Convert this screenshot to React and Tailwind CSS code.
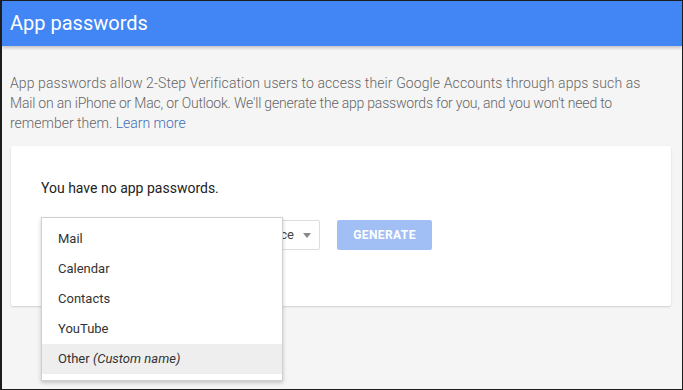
import React from "react";

const options = ["Mail", "Calendar", "Contacts", "YouTube"];

const App = () => {
  return (
    <div
      className="w-[683px] h-[390px] overflow-hidden border border-l-2 border-[#1c1c1c] bg-[#f5f5f5] flex flex-col"
      style={{ fontFamily: "Roboto, 'Liberation Sans', sans-serif" }}
    >
      {/* HEADER */}
      <div className="h-[45px] shrink-0 bg-[#4285f4] px-[8px] flex items-center shadow-[0_2px_3px_rgba(0,0,0,0.2)] relative z-10">
        <h1 className="text-[20px] text-white leading-none pb-[2px]">App passwords</h1>
      </div>

      {/* BODY */}
      <div className="px-[8px] pt-[27px]">
        <p className="text-[14px] leading-[20px] text-[#666] font-light whitespace-nowrap">
          <span className="tracking-[0.1px]">
            App passwords allow 2-Step Verification users to access their Google Accounts through apps such as
          </span>
          <br />
          <span className="tracking-[-0.2px]">
            Mail on an iPhone or Mac, or Outlook. We'll generate the app passwords for you, and you won't need to
          </span>
          <br />
          remember them. <span className="text-[#3d6fb4]">Learn more</span>
        </p>

        <div className="mt-[13px] ml-[1px] w-[660px] h-[160px] bg-white rounded-[2px] shadow-[0_1px_2px_rgba(0,0,0,0.15)] px-[30px] pt-[32px] relative">
          <p className="text-[14px] leading-[20px] text-[#222]">You have no app passwords.</p>

          <div className="flex items-center mt-[22px] gap-[17px]">
            <div className="w-[279px] h-[30px] border border-[#ddd] rounded-[2px] flex items-center justify-end pr-[8px] gap-[9px]">
              <span className="text-[13px] text-[#444]">Select device</span>
              <span className="w-0 h-0 border-l-[4px] border-r-[4px] border-t-[5px] border-l-transparent border-r-transparent border-t-[#888]" />
            </div>
            <button className="w-[95px] h-[30px] bg-[#a1bff5] rounded-[2px] text-white text-[12px] font-bold tracking-[0.4px]">
              GENERATE
            </button>
          </div>

          {/* DROPDOWN */}
          <div className="absolute left-[30px] top-[71px] w-[242px] bg-white border border-[#d0d0d0] shadow-[0_2px_4px_rgba(0,0,0,0.2)] py-[6px]">
            {options.map((o) => (
              <div key={o} className="h-[30px] px-[16px] flex items-center text-[13px] text-[#333]">
                {o}
              </div>
            ))}
            <div className="h-[30px] px-[16px] flex items-center text-[13px] text-[#333] bg-[#eee]">
              Other&nbsp;<span className="italic">(Custom name)</span>
            </div>
          </div>
        </div>
      </div>
    </div>
  );
};

export default App;
